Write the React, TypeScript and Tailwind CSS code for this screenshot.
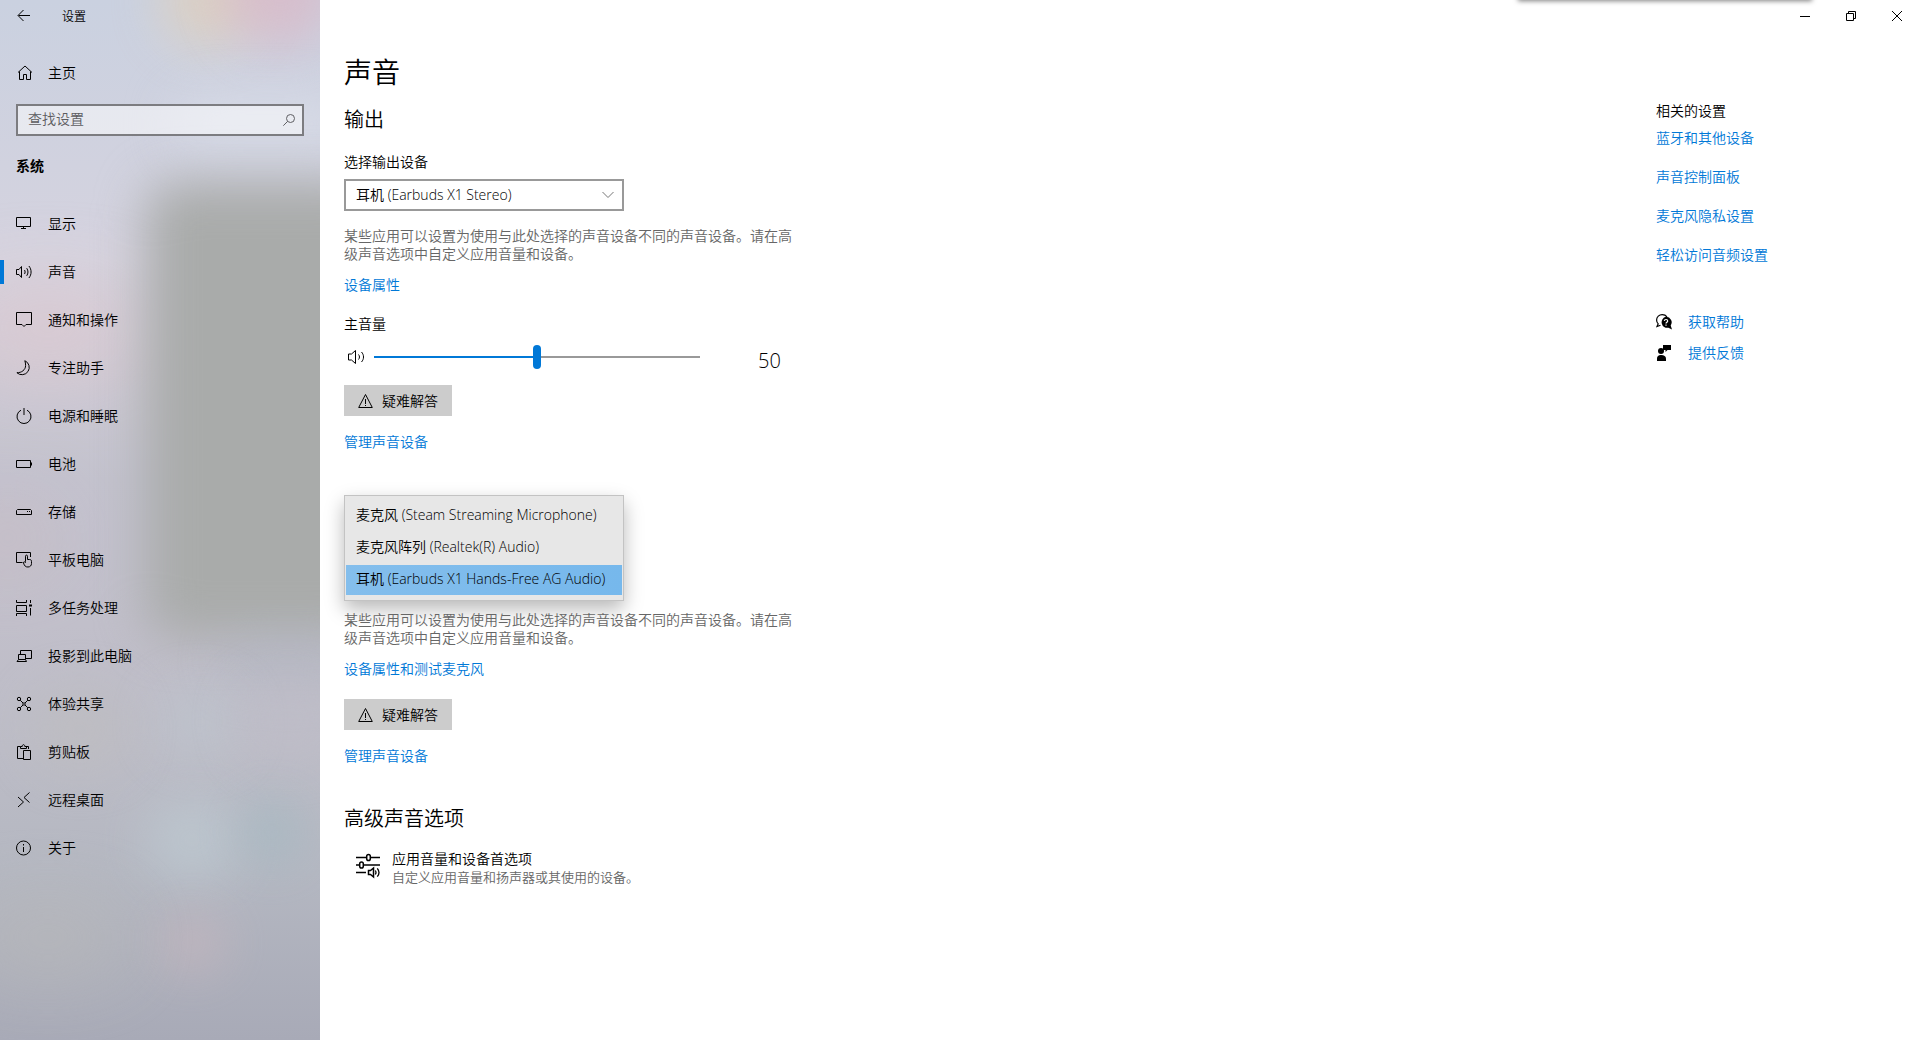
import { useState, type CSSProperties, type ReactNode } from "react";

const glyph = "h-4 w-4 shrink-0 fill-none stroke-black";

function Glyph({ children }: { children: ReactNode }) {
  return (
    <svg viewBox="0 0 16 16" className={glyph} aria-hidden="true">
      {children}
    </svg>
  );
}

const navItems: { label: string; icon: ReactNode }[] = [
  { label: "显示", icon: <path d="M.5 1.500h14v9H.5zM7.500 10.500v2M5 12.500h5" /> },
  {
    label: "声音",
    icon: (
      <path d="M.5 5.500H3l2.500-3v11l-2.500-3H.5zM8.500 6c.8 1.200.8 2.800 0 4M10.700 4.200c1.700 2.300 1.700 5.300 0 7.600M12.900 2c2.900 3.500 2.900 8.500 0 12" />
    ),
  },
  { label: "通知和操作", icon: <path d="M.5.5h15v12H10l-2 2-2-2H.5z" /> },
  {
    label: "专注助手",
    icon: <path d="M8.800.7A7.300 7.300 0 1 1 .9 12.700C5.500 12.900 9.600 9.800 9.600 5.600c0-1.800-.2-3.400-.8-4.900z" />,
  },
  { label: "电源和睡眠", icon: <path d="M5 2.200a7 7 0 1 0 6 0M8 0v7" /> },
  { label: "电池", icon: <path d="M.5 4.500h14v7H.5zM15.500 6.500v3" /> },
  {
    label: "存储",
    icon: <path d="M1.500 5.500h13l1 1v4H.5v-4zM11 7.500h1M13 7.500h1" />,
  },
  {
    label: "平板电脑",
    icon: (
      <path d="M6.500 10.500h-6V.5h14V5M9.500 9.500V4.200c0-1.500 2-1.500 2 0v3.300h2c1.500 0 2 .7 2 2v2c0 2-1.300 3.500-3.500 3.500-2.500 0-3.500-1-4.500-4-.3-1.300 1-1.600 2-.5z" />
    ),
  },
  {
    label: "多任务处理",
    icon: (
      <>
        <path d="M.5 0v2.500h10V0M.5 5.500h10v6H.5zM.5 16v-2.500h10V16M14.500 0v3M14.500 8v7.500" />
        <path d="M13 4.500h3v2h-3z" className="fill-black stroke-none" />
      </>
    ),
  },
  {
    label: "投影到此电脑",
    icon: <path d="M4.500 6V2.500h11v8h-6M2.500 6.500h7v5h-7zM2.500 11.500l-1.500 2h9.500l-1-2" />,
  },
  {
    label: "体验共享",
    icon: (
      <>
        <circle cx="3" cy="3" r="1.700" />
        <circle cx="13" cy="3" r="1.700" />
        <circle cx="3" cy="13" r="1.700" />
        <circle cx="13" cy="13" r="1.700" />
        <path d="M4.200 4.200l3 3M11.800 4.200l-3 3M4.200 11.800l3-3M11.800 11.800l-3-3M6.500 8L8 6.500 9.500 8 8 9.500z" />
      </>
    ),
  },
  {
    label: "剪贴板",
    icon: (
      <path d="M7 14.500H1.500v-12h3M9.500 2.500h3V5M4.500 4.500v-2h1.700c0-2.500 2.600-2.500 2.600 0h1.700v2zM7.500 6.500h7v9h-7z" />
    ),
  },
  { label: "远程桌面", icon: <path d="M2 5l5.500 5L2 15M13.500.5l-5.500 5 5.500 5" /> },
  {
    label: "关于",
    icon: (
      <>
        <circle cx="7.500" cy="8" r="7" />
        <path d="M7.500 7v5M7.500 4v1.500" />
      </>
    ),
  },
];

function SidebarBackdrop() {
  return (
    <div
      aria-hidden="true"
      className="absolute inset-0 bg-[linear-gradient(180deg,#cad1e0_0%,#d1d2df_16%,#d5d3df_25%,#ccc9d4_36%,#c3c2ce_46%,#c1bfca_60%,#bcbcc6_72%,#b4b7c1_84%,#a8aab7_100%)]"
    >
      <div className="absolute -top-12 left-40 h-24 w-24 rounded-full bg-[#dfd0bd] opacity-80 blur-xl" />
      <div className="absolute -top-16 left-56 h-28 w-28 rounded-full bg-[#dcb7c5] opacity-70 blur-xl" />
      <div className="absolute top-24 left-44 h-14 w-44 rounded-full bg-[#d6dae6] blur-xl" />
      <div className="absolute top-72 -left-10 h-20 w-44 rounded-full bg-[#dec9d0] opacity-80 blur-2xl" />
      <div className="absolute top-[510px] -left-10 h-14 w-24 rounded-full bg-[#cbbbc2] opacity-80 blur-2xl" />
      <div className="absolute top-[182px] -right-16 left-[146px] h-[456px] rounded-[32px] bg-[#a9abaa] blur-xl" />
      <div className="absolute top-[640px] left-56 h-10 w-32 rounded-full bg-[#afb4c0] opacity-70 blur-xl" />
      <div className="absolute top-[690px] left-40 h-16 w-20 rounded-full bg-[#bec5ce] opacity-70 blur-xl" />
      <div className="absolute top-[680px] left-60 h-20 w-24 rounded-full bg-[#bfbdc8] opacity-70 blur-xl" />
      <div className="absolute top-[690px] left-8 h-20 w-24 rounded-full bg-[#bebdc0] opacity-70 blur-xl" />
      <div className="absolute top-[800px] left-36 h-20 w-24 rounded-full bg-[#bdc8d0] opacity-80 blur-xl" />
      <div className="absolute top-[800px] left-60 h-16 w-16 rounded-full bg-[#a5b9c2] opacity-80 blur-xl" />
      <div className="absolute top-[915px] left-40 h-14 w-16 rounded-full bg-[#c5b6be] opacity-80 blur-xl" />
      <div className="absolute top-[905px] -left-8 h-16 w-40 rounded-full bg-[#b9b9b9] opacity-80 blur-2xl" />
    </div>
  );
}

function Sidebar() {
  return (
    <aside className="relative w-80 shrink-0 overflow-hidden">
      <SidebarBackdrop />
      <div className="relative flex flex-col">
        <div className="flex h-8 items-center">
          <button type="button" aria-label="返回" className="flex h-8 w-12 items-center justify-center">
            <Glyph>
              <path d="M14 7.500H2.500M7.500 2L2 7.500 7.500 13" />
            </Glyph>
          </button>
          <span className="ml-3.5 pt-px text-xs">设置</span>
        </div>
        <a href="#home" className="mt-[17px] flex h-12 items-center gap-4 px-4">
          <svg viewBox="0 0 16 16" className={glyph} aria-hidden="true">
            <path d="M2 7.500L9 1l7 6.500M3.500 6.500v8h4v-5h3v5h4v-8" />
          </svg>
          <span>主页</span>
        </a>
        <div className="relative mx-4 mt-[7px]">
          <input
            type="text"
            aria-label="查找设置"
            placeholder="查找设置"
            className="block h-8 w-full border-2 border-[#7c7c80] bg-white/50 px-2.5 pb-1 text-sm outline-none placeholder:text-[#5c5c60]"
          />
          <svg
            viewBox="0 0 12 12"
            aria-hidden="true"
            className="pointer-events-none absolute top-2.5 right-[9px] h-3 w-3 fill-none stroke-[#5f5f63]"
          >
            <circle cx="7.500" cy="4.500" r="4" />
            <path d="M4.700 7.300L.3 11.700" />
          </svg>
        </div>
        <h2 className="mt-[21px] px-4 font-bold">系统</h2>
        <nav className="mt-[25px]">
          <ul>
            {navItems.map(({ label, icon }) => (
              <li key={label} className="relative">
                {label === "声音" && <span className="absolute top-3 left-0 h-6 w-1 bg-[#0078d7]" />}
                <a href={"#" + label} className="flex h-12 items-center gap-4 px-4">
                  <Glyph>{icon}</Glyph>
                  <span>{label}</span>
                </a>
              </li>
            ))}
          </ul>
        </nav>
      </div>
    </aside>
  );
}

function TextLink({ children, className = "" }: { children: ReactNode; className?: string }) {
  return (
    <div className={className}>
      <a href="#link" className="text-[#0078d7] hover:text-gray-500">
        {children}
      </a>
    </div>
  );
}

function TroubleshootButton({ className }: { className: string }) {
  return (
    <button type="button" className={"flex h-[31px] items-center gap-2 bg-[#cccccc] px-3.5 " + className}>
      <Glyph>
        <path d="M7.500 1.500L.7 14.500h13.600zM7.500 6v5M7.500 12v1" />
      </Glyph>
      <span>疑难解答</span>
    </button>
  );
}

function Hint() {
  return <>某些应用可以设置为使用与此处选择的声音设备不同的声音设备。请在高级声音选项中自定义应用音量和设备。</>;
}

function VolumeSlider() {
  const [volume, setVolume] = useState(50);
  return (
    <div className="mt-3 flex">
      <svg viewBox="0 0 18 16" className="mt-1 ml-1 h-4 w-[18px] fill-none stroke-black" aria-hidden="true">
        <path d="M.5 5v6h3l4 3.500v-13L3.500 5z" />
        <path d="M10.500 5.500c1.300 1.500 1.300 3.500 0 5M13.500 3c2.700 3 2.700 7 0 10" />
      </svg>
      <input
        id="volume"
        type="range"
        min={0}
        max={100}
        value={volume}
        onChange={(e) => setVolume(Number(e.target.value))}
        style={{ "--fill": volume + "%" } as CSSProperties}
        className="ml-2 h-6 w-[326px] appearance-none bg-[linear-gradient(90deg,#0078d7_var(--fill),#999999_var(--fill))] bg-[length:100%_2px] bg-center bg-no-repeat [&::-webkit-slider-thumb]:h-6 [&::-webkit-slider-thumb]:w-2 [&::-webkit-slider-thumb]:appearance-none [&::-webkit-slider-thumb]:rounded-full [&::-webkit-slider-thumb]:bg-[#0078d7]"
      />
      <output htmlFor="volume" className="ml-[58px] text-xl leading-8">
        {volume}
      </output>
    </div>
  );
}

const microphones = [
  "麦克风 (Steam Streaming Microphone)",
  "麦克风阵列 (Realtek(R) Audio)",
  "耳机 (Earbuds X1 Hands-Free AG Audio)",
];

function MicrophoneList() {
  const [selected, setSelected] = useState(2);
  return (
    <div
      role="listbox"
      aria-label="选择输入设备"
      className="mt-11 flex w-[280px] flex-col gap-0.5 border border-[#c3c3c3] bg-[#e7e7e7] px-px py-[5px] shadow-[0_8px_18px_rgba(0,0,0,0.28)]"
    >
      {microphones.map((name, index) => (
        <button
          key={name}
          type="button"
          role="option"
          aria-selected={index === selected}
          onClick={() => setSelected(index)}
          className={
            "block h-[30px] w-full px-2.5 pb-0.5 text-left whitespace-nowrap " +
            (index === selected ? "bg-[linear-gradient(90deg,#84beec,#76b8ec)]" : "")
          }
        >
          {name}
        </button>
      ))}
    </div>
  );
}

function SoundSettings() {
  return (
    <main className="w-[474px] pt-[22px] pl-6">
      <h1 className="text-[28px] leading-9">声音</h1>
      <h2 className="mt-4 text-xl leading-7">输出</h2>
      <label htmlFor="output-device" className="mt-[19px] block">
        选择输出设备
      </label>
      <div className="relative mt-2 w-[280px]">
        <select
          id="output-device"
          className="block h-8 w-full appearance-none border-2 border-[#999999] bg-white px-2.5 outline-none"
        >
          <option>耳机 (Earbuds X1 Stereo)</option>
        </select>
        <svg
          viewBox="0 0 12 8"
          aria-hidden="true"
          className="pointer-events-none absolute top-3 right-2.5 h-2 w-3 fill-none stroke-[#777777]"
        >
          <path d="M.5 1L6 6.500 11.500 1" />
        </svg>
      </div>
      <p className="mt-4 text-[#666666]">
        <Hint />
      </p>
      <TextLink className="mt-[13px]">设备属性</TextLink>
      <label htmlFor="volume" className="mt-[21px] block">
        主音量
      </label>
      <VolumeSlider />
      <TroubleshootButton className="mt-2" />
      <TextLink className="mt-[17px]">管理声音设备</TextLink>
      <MicrophoneList />
      <p className="mt-2.5 text-[#666666]">
        <Hint />
      </p>
      <TextLink className="mt-[13px]">设备属性和测试麦克风</TextLink>
      <TroubleshootButton className="mt-[21px]" />
      <TextLink className="mt-[17px]">管理声音设备</TextLink>
      <h2 className="mt-10 text-xl leading-7">高级声音选项</h2>
      <a href="#app-volume" className="mt-[17px] flex items-start gap-3 pl-3">
        <svg viewBox="0 0 24 26" className="mt-[3px] h-[26px] w-6 fill-none stroke-black" aria-hidden="true">
          <path strokeWidth="1.500" d="M0 4.500h10M15 4.500h9M0 12h3M8 12h16M0 19.500h10" />
          <rect x="10.700" y="1.500" width="3.600" height="6" rx="1.800" strokeWidth="1.500" />
          <rect x="3.700" y="9" width="3.600" height="6" rx="1.800" strokeWidth="1.500" />
          <path strokeWidth="1.500" d="M12.500 17.500v4h2l3 2.500v-9l-3 2.500z" />
          <path strokeWidth="1.300" d="M19.300 17.500c.9 1.300.9 2.700 0 4M21.300 15.300c2.100 2.600 2.100 5.800 0 8.400" />
        </svg>
        <span className="flex flex-col">
          <span>应用音量和设备首选项</span>
          <span className="text-[13px] text-[#666666]">自定义应用音量和扬声器或其使用的设备。</span>
        </span>
      </a>
    </main>
  );
}

function RelatedSettings() {
  return (
    <aside className="w-[264px] pt-[70px]">
      <h2>相关的设置</h2>
      <ul className="mt-[9px] flex flex-col gap-[21px] text-[#0078d7]">
        {["蓝牙和其他设备", "声音控制面板", "麦克风隐私设置", "轻松访问音频设置"].map((label) => (
          <li key={label}>
            <a href={"#" + label}>{label}</a>
          </li>
        ))}
      </ul>
      <ul className="mt-[49px] flex flex-col gap-[13px] text-[#0078d7]">
        <li>
          <a href="#help" className="flex items-center gap-4">
            <svg viewBox="0 0 16 16" className="h-4 w-4 fill-none" aria-hidden="true">
              <path
                className="stroke-black"
                strokeWidth="1.200"
                d="M11 2.800C9.800 1.300 8 .6 6.200.6 3.200.6.600 2.900.600 5.900c0 1.600.6 2.900 1.600 3.900L1 12.500l3.500-1.200"
              />
              <path
                className="fill-black"
                d="M10 2.800a5.500 5.500 0 0 1 4.700 8.600l1.300 4-3.600-1.700A5.500 5.500 0 1 1 10 2.800z"
              />
              <path className="stroke-white" strokeWidth="1.200" d="M8.300 6.900c.2-1.900 3.400-1.800 3.400 0 0 1.300-1.700 1.200-1.700 2.600M10 10.500v1.300" />
            </svg>
            <span>获取帮助</span>
          </a>
        </li>
        <li>
          <a href="#feedback" className="flex items-center gap-4">
            <svg viewBox="0 0 16 16" className="h-4 w-4 fill-black" aria-hidden="true">
              <path d="M7 0h8v5h-3.500L9.500 7V5H7z" />
              <circle cx="5" cy="6" r="3" />
              <path d="M1 16v-2.500C1 11.300 2.600 10 4.500 10h1C7.800 10 10 11.300 10 13.500V16z" />
            </svg>
            <span>提供反馈</span>
          </a>
        </li>
      </ul>
    </aside>
  );
}

function WindowControls() {
  const control = "flex h-8 w-[46px] items-center justify-center";
  const icon = "h-2.5 w-2.5 fill-none stroke-black";
  return (
    <div className="relative flex h-8 justify-end">
      <div
        aria-hidden="true"
        className="absolute -top-4 right-[108px] h-4 w-[294px] shadow-[0_1px_5px_rgba(0,0,0,0.5)]"
      />
      <button type="button" aria-label="最小化" className={control}>
        <svg viewBox="0 0 10 10" className={icon}>
          <path d="M0 5.500h10" />
        </svg>
      </button>
      <button type="button" aria-label="向下还原" className={control}>
        <svg viewBox="0 0 10 10" className={icon}>
          <path d="M.5 2.500h7v7h-7zM2.500 2.500v-2h7v7h-2" />
        </svg>
      </button>
      <button type="button" aria-label="关闭" className={control}>
        <svg viewBox="0 0 10 10" className={icon}>
          <path d="M0 0l10 10M10 0L0 10" />
        </svg>
      </button>
    </div>
  );
}

export default function App() {
  return (
    <div className="flex min-h-screen bg-white font-['Open_Sans','Noto_Sans_CJK_SC',sans-serif] text-sm leading-[18px] font-[350] text-black">
      <Sidebar />
      <div className="flex flex-1 flex-col overflow-hidden">
        <WindowControls />
        <div className="flex flex-1 justify-between">
          <SoundSettings />
          <RelatedSettings />
        </div>
      </div>
    </div>
  );
}
